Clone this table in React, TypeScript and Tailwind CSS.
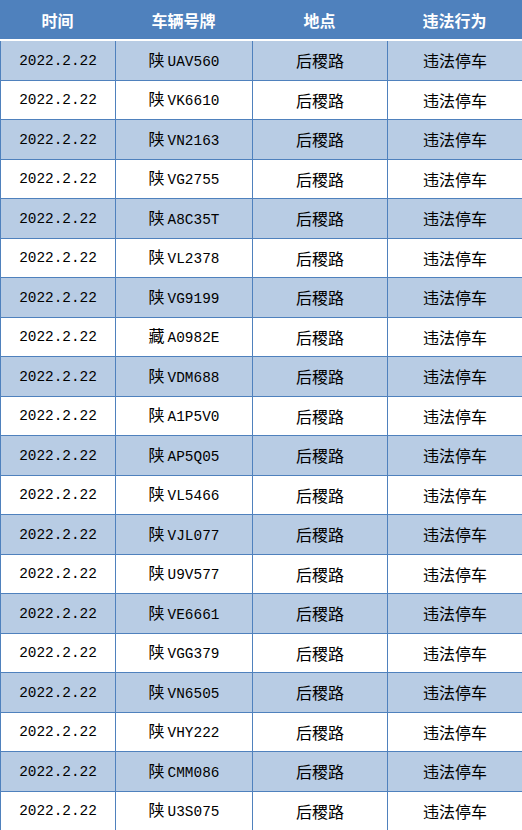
import React from "react";

const plates: [string, string][] = [
  ["陕", "UAV560"],
  ["陕", "VK6610"],
  ["陕", "VN2163"],
  ["陕", "VG2755"],
  ["陕", "A8C35T"],
  ["陕", "VL2378"],
  ["陕", "VG9199"],
  ["藏", "A0982E"],
  ["陕", "VDM688"],
  ["陕", "A1P5V0"],
  ["陕", "AP5Q05"],
  ["陕", "VL5466"],
  ["陕", "VJL077"],
  ["陕", "U9V577"],
  ["陕", "VE6661"],
  ["陕", "VGG379"],
  ["陕", "VN6505"],
  ["陕", "VHY222"],
  ["陕", "CMM086"],
  ["陕", "U3S075"],
];

const cjk = "font-['Noto_Sans_CJK_SC',sans-serif] text-[16px]";
// half-width latin, 8.64px per glyph
const mono = "font-['Liberation_Mono',monospace] text-[14.4px]";

const App: React.FC = () => {
  return (
    <div className="w-[522px] h-[830px] overflow-hidden bg-white text-black">
      {/* Header */}
      <div className="grid grid-cols-[115px_137px_135px_135px] h-[39px] bg-[#4f81bd] text-white font-bold">
        {["时间", "车辆号牌", "地点", "违法行为"].map((h) => (
          <div key={h} className={`flex items-center justify-center ${cjk}`}>
            {h}
          </div>
        ))}
      </div>
      <div className="h-[2px] bg-white" />

      {/* Rows */}
      {plates.map(([prov, num], i) => (
        <div
          key={i}
          className={`grid grid-cols-[115px_137px_135px_135px] h-[39.5px] border-b border-[#4f81bd] ${
            i % 2 === 0 ? "bg-[#b8cce4]" : "bg-white"
          }`}
        >
          <div className="flex items-center justify-center border-l border-[#4f81bd]">
            <span className={`${mono} pt-[3px]`}>2022.2.22</span>
          </div>
          <div className="flex items-center justify-center border-l border-[#4f81bd]">
            <span className="flex items-baseline gap-[3px]">
              <span className={cjk}>{prov}</span>
              <span className={mono}>{num}</span>
            </span>
          </div>
          <div className={`flex items-center justify-center border-l border-[#4f81bd] ${cjk}`}>
            后稷路
          </div>
          <div className={`flex items-center justify-center border-l border-[#4f81bd] ${cjk}`}>
            违法停车
          </div>
        </div>
      ))}
    </div>
  );
};

export default App;
